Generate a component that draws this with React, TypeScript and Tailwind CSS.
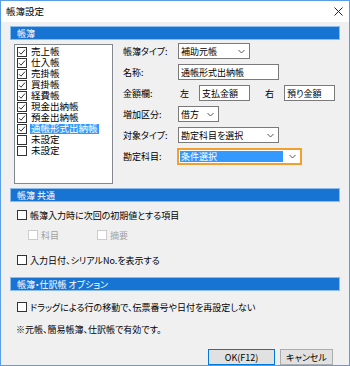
import React from "react";

const Box = ({ checked = false, disabled = false }: { checked?: boolean; disabled?: boolean }) => (
  <span
    className={
      "w-[10px] h-[10px] shrink-0 border bg-white flex items-center justify-center " +
      (disabled ? "border-[#cccccc]" : "border-[#333333]")
    }
  >
    {checked && (
      <svg width="8" height="8" viewBox="0 0 8 8">
        <path d="M1 4.2 L3 6.2 L7 1.6" stroke="#333" fill="none" strokeWidth="1" />
      </svg>
    )}
  </span>
);

const Chevron = () => (
  <svg width="7" height="5" viewBox="0 0 7 5" className="shrink-0">
    <path d="M0.5 1 L3.5 4 L6.5 1" stroke="#555" fill="none" strokeWidth="1" />
  </svg>
);

const Bar = ({ children }: { children: React.ReactNode }) => (
  <div className="h-[14px] bg-[#1874d2] border border-[#8cbcec] text-white flex items-center pl-[6px] leading-none">
    {children}
  </div>
);

const Select = ({ w, text }: { w: string; text: string }) => (
  <div className={w + " h-[16px] bg-white border border-[#7a7a7a] flex items-center justify-between pl-[2px] pr-[4px]"}>
    <span className="leading-none">{text}</span>
    <Chevron />
  </div>
);

const Input = ({ w, text }: { w: string; text: string }) => (
  <div className={w + " h-[16px] bg-white border border-[#7a7a7a] flex items-center pl-[2px]"}>
    <span className="leading-none">{text}</span>
  </div>
);

const items: { t: string; c: boolean; sel?: boolean }[] = [
  { t: "売上帳", c: true },
  { t: "仕入帳", c: true },
  { t: "売掛帳", c: true },
  { t: "買掛帳", c: true },
  { t: "経費帳", c: true },
  { t: "現金出納帳", c: true },
  { t: "預金出納帳", c: true },
  { t: "通帳形式出納帳", c: true, sel: true },
  { t: "未設定", c: false },
  { t: "未設定", c: false },
];

export default function App() {
  return (
    <div className="w-[350px] h-[366px] border border-[#5a9ee6] bg-[#f0f0f0] flex flex-col text-[9px] text-black font-['Noto_Sans_CJK_JP','Noto_Sans',sans-serif] [font-feature-settings:'palt'] overflow-hidden">
      <div className="h-[21px] bg-white flex items-center justify-between pl-[5px] pr-[6px] shrink-0">
        <span className="leading-none text-[9.5px]">帳簿設定</span>
        <svg width="9" height="9" viewBox="0 0 9 9">
          <path d="M0.5 0.5 L8.5 8.5 M8.5 0.5 L0.5 8.5" stroke="#222" strokeWidth="1" />
        </svg>
      </div>
      <div className="flex flex-col px-[9px] pt-[4px]">
        <Bar>帳簿</Bar>
        <div className="flex mt-[4px] pl-[4px]">
          <div className="w-[99px] h-[140px] bg-white border border-[#828790] flex flex-col pt-[1px] pl-[2px]">
            {items.map((it, i) => (
              <div key={i} className="h-[11px] flex items-center">
                <Box checked={it.c} />
                <span
                  className={
                    "ml-[3px] leading-none px-[1px] h-[10px] flex items-center text-[9.5px] " +
                    (it.sel ? "bg-[#3399ff] text-white" : "")
                  }
                >
                  {it.t}
                </span>
              </div>
            ))}
          </div>
          <div className="flex flex-col ml-[10px] gap-[5px] -mt-[1px]">
            <div className="flex items-center h-[16px]">
              <span className="w-[55px] leading-none">帳簿タイプ:</span>
              <Select w="w-[72px]" text="補助元帳" />
            </div>
            <div className="flex items-center h-[16px]">
              <span className="w-[55px] leading-none">名称:</span>
              <Input w="w-[101px]" text="通帳形式出納帳" />
            </div>
            <div className="flex items-center h-[16px]">
              <span className="w-[55px] leading-none">金額欄:</span>
              <span className="w-[21px] leading-none pl-[2px]">左</span>
              <Input w="w-[51px]" text="支払金額" />
              <span className="w-[34px] leading-none pl-[15px]">右</span>
              <Input w="w-[51px]" text="預り金額" />
            </div>
            <div className="flex items-center h-[16px]">
              <span className="w-[55px] leading-none">増加区分:</span>
              <Select w="w-[41px]" text="借方" />
            </div>
            <div className="flex items-center h-[16px]">
              <span className="w-[55px] leading-none">対象タイプ:</span>
              <Select w="w-[101px]" text="勘定科目を選択" />
            </div>
            <div className="flex items-center h-[16px]">
              <span className="w-[54px] leading-none">勘定科目:</span>
              <div className="w-[125px] h-[17px] border-2 border-[#f0a030] bg-white flex items-center justify-between pl-[1px] pr-[4px]">
                <span className="bg-[#3399ff] text-white w-[103px] h-[11px] flex items-center leading-none pl-[1px]">条件選択</span>
                <Chevron />
              </div>
            </div>
          </div>
        </div>
        <div className="mt-[4px]">
          <Bar>帳簿 共通</Bar>
        </div>
        <div className="flex items-center h-[12px] mt-[7px] pl-[7px]">
          <Box />
          <span className="ml-[3px] leading-none">帳簿入力時に次回の初期値とする項目</span>
        </div>
        <div className="flex items-center h-[12px] mt-[8px] pl-[18px] text-[#a0a0a0]">
          <Box disabled />
          <span className="ml-[3px] leading-none w-[56px]">科目</span>
          <Box disabled />
          <span className="ml-[3px] leading-none">摘要</span>
        </div>
        <div className="flex items-center h-[12px] mt-[13px] pl-[7px]">
          <Box />
          <span className="ml-[3px] leading-none">入力日付、シリアルNo.を表示する</span>
        </div>
        <div className="mt-[11px]">
          <Bar>帳簿・仕訳帳 オプション</Bar>
        </div>
        <div className="flex items-center h-[12px] mt-[10px] pl-[7px]">
          <Box />
          <span className="ml-[3px] leading-none">ドラッグによる行の移動で、伝票番号や日付を再設定しない</span>
        </div>
        <div className="flex items-center h-[12px] mt-[10px] pl-[6px]">
          <span className="leading-none">※元帳、簡易帳簿、仕訳帳で有効です。</span>
        </div>
        <div className="flex justify-end gap-[5px] mt-[14px] pr-[7px]">
          <div className="w-[67px] h-[16px] bg-[#e1e1e1] border border-[#0078d7] flex items-center justify-center leading-none">
            OK(F12)
          </div>
          <div className="w-[53px] h-[16px] bg-[#e1e1e1] border border-[#adadad] flex items-center justify-center leading-none">
            キャンセル
          </div>
        </div>
      </div>
    </div>
  );
}
